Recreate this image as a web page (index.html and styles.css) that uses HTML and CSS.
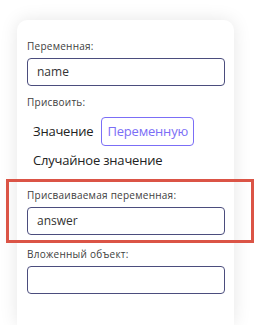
FILE: index.html
```html
<!DOCTYPE html>
<html lang="ru">
<head>
<meta charset="utf-8">
<link rel="stylesheet" href="styles.css">
</head>
<body>
<div class="card">
  <div class="field">
    <div class="label">Переменная:</div>
    <div class="input">name</div>
  </div>
  <div class="field field-assign">
    <div class="label">Присвоить:</div>
    <div class="options">
      <span class="option">Значение</span>
      <span class="option active">Переменную</span>
      <span class="option">Случайное значение</span>
    </div>
  </div>
  <div class="field field-target">
    <div class="highlight"></div>
    <div class="label">Присваиваемая переменная:</div>
    <div class="input">answer</div>
  </div>
  <div class="field field-nested">
    <div class="label">Вложенный объект:</div>
    <div class="input"></div>
  </div>
</div>
</body>
</html>
```

FILE: styles.css
```css
* { box-sizing: border-box; }
html, body { margin: 0; padding: 0; background: #ffffff; overflow: hidden; }
body { font-family: "Open Sans", "Noto Sans", sans-serif; color: #2b2b2b; }

.card {
  margin: 20px 0 0 17px;
  width: 217px;
  height: 305px;
  background: #fff;
  border-radius: 10px 10px 0 0;
  box-shadow: 0 0 18px rgba(0, 0, 0, 0.10);
  padding: 19px 9px 0 10px;
  position: relative;
}

.field { position: relative; }
.label {
  font-size: 10px;
  line-height: 14px;
  letter-spacing: 0.25px;
  color: #404040;
  margin-bottom: 5px;
}
.input {
  height: 28px;
  border: 1px solid #4b4d7d;
  border-radius: 4px;
  padding: 0 9px;
  font-size: 12px;
  line-height: 26px;
  color: #333;
}

.field-assign { margin-top: 9px; }
.field-assign .label { margin-bottom: 8px; }
.options {
  display: flex;
  flex-wrap: wrap;
  column-gap: 2px;
  row-gap: 0;
}
.option {
  height: 29px;
  padding: 0 5px;
  border: 1px solid transparent;
  border-radius: 4px;
  font-size: 13px;
  line-height: 27px;
  letter-spacing: -0.2px;
  color: #222;
}
.option.active {
  border-color: #7b6ef6;
  color: #7b6ef6;
}

.field-target { margin-top: 13px; }
.highlight {
  position: absolute;
  left: -21px;
  right: -29px;
  top: -9px;
  bottom: -8px;
  border: 3px solid #db5446;
  pointer-events: none;
}

.field-nested { margin-top: 12px; }
```
